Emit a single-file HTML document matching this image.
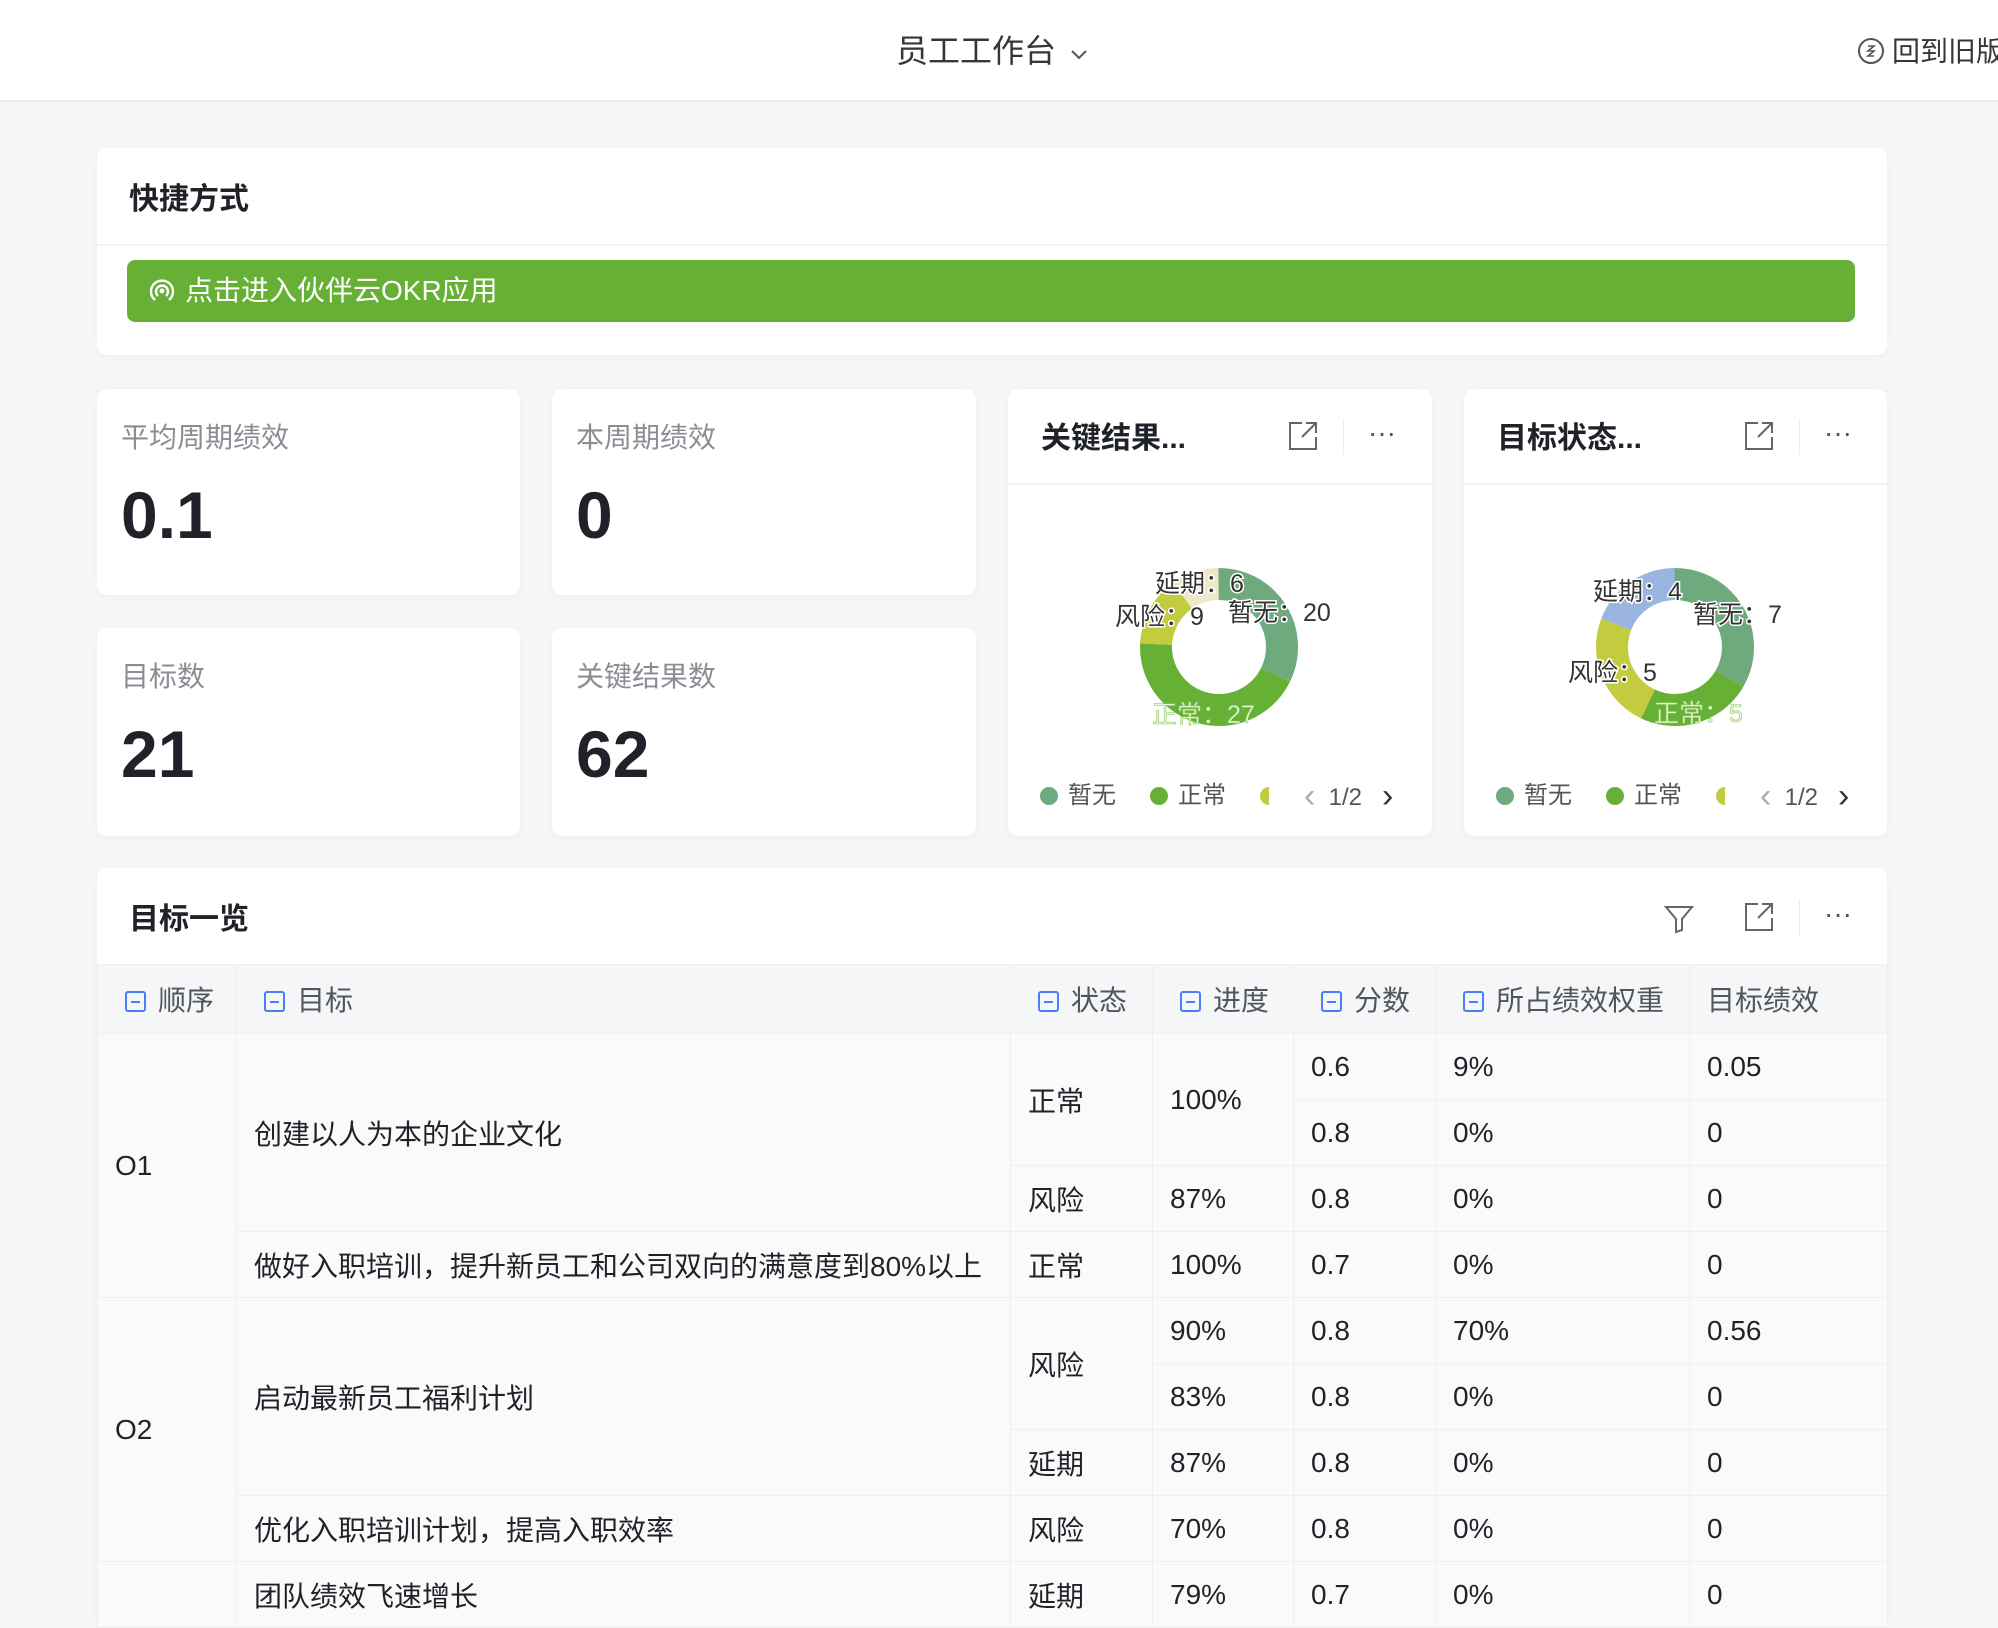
<!DOCTYPE html>
<html><head><meta charset="utf-8">
<style>
*{box-sizing:border-box;margin:0;padding:0}
body{width:1998px;height:1598px;overflow:hidden;background:#f5f6f8;font-family:"Liberation Sans","Noto Sans CJK SC",sans-serif;color:#1f2329;position:relative}
.top{position:absolute;left:0;top:0;width:1998px;height:102px;background:#fff;border-bottom:2px solid #e8e8e8}
.card{position:absolute;background:#fff;border-radius:10px;box-shadow:0 2px 10px rgba(0,0,0,0.03)}
.abs{position:absolute;white-space:nowrap}
.lbl{font-size:28px;color:#8a8d93}
.val{font-size:66px;font-weight:600;color:#1f2329;font-family:"Liberation Sans",sans-serif}
.ct{font-size:30px;font-weight:700}
table{border-collapse:collapse;table-layout:fixed;position:absolute;left:97px;top:964px;width:1790px}
td,th{border:1px solid #efefef;font-size:28px;font-weight:400;text-align:left;padding:0 0 0 17px;height:66px;color:#1f2329;white-space:nowrap;overflow:hidden}
th{background:#f5f6f7;height:69px;color:#51555c;padding-left:27px}
th:last-child{padding-left:17px}
td{background:#fafafa}
.cb{display:inline-block;width:21px;height:21px;border:2px solid #4a7ef5;border-radius:3px;vertical-align:-2px;margin-right:12px;position:relative}
.cb:after{content:"";position:absolute;left:4px;right:4px;top:8px;height:2px;background:#4a7ef5}
.dl{font-size:25px;fill:#333;paint-order:stroke;stroke:#fff;stroke-width:3px}
.ar{font-size:34px;line-height:30px;vertical-align:-2px}
</style></head><body>
<div class="top">
 <div class="abs" style="left:896px;top:26px;font-size:32px;color:#33363b">员工工作台 <svg width="20" height="14" viewBox="0 0 20 14" style="margin-left:4px"><path d="M3 3l7 7 7-7" fill="none" stroke="#555" stroke-width="2"/></svg></div>
 <div class="abs" style="left:1856px;top:30px;font-size:28px;color:#33363b"><svg width="30" height="30" viewBox="0 0 30 30" style="vertical-align:-5px;margin-right:6px"><circle cx="15" cy="15" r="12" fill="none" stroke="#555" stroke-width="2"/><path d="M12 10h6l-6 5h6l-6 5h6" fill="none" stroke="#555" stroke-width="1.6"/></svg>回到旧版</div>
</div>

<div class="card" style="left:97px;top:148px;width:1790px;height:207px">
 <div class="abs" style="left:32px;top:26px;font-size:30px;font-weight:700">快捷方式</div>
 <div class="abs" style="left:0;top:96px;width:1790px;height:2px;background:#f2f3f5"></div>
 <div class="abs" style="left:30px;top:112px;width:1728px;height:62px;background:#67b036;border-radius:8px;color:#fff;font-size:28px;line-height:62px;padding-left:20px"><svg width="30" height="30" viewBox="0 0 30 30" style="vertical-align:-6px;margin-right:8px"><path d="M8 24A11 11 0 1 1 22 24" fill="none" stroke="#fff" stroke-width="2.4"/><path d="M11 20A6 6 0 1 1 19 20" fill="none" stroke="#fff" stroke-width="2.4"/><circle cx="15" cy="15" r="2.5" fill="#fff"/></svg>点击进入伙伴云OKR应用</div>
</div>

<div class="card" style="left:97px;top:389px;width:423px;height:206px"><div class="abs lbl" style="left:24px;top:27px">平均周期绩效</div><div class="abs val" style="left:24px;top:88px">0.1</div></div>
<div class="card" style="left:552px;top:389px;width:424px;height:206px"><div class="abs lbl" style="left:24px;top:27px">本周期绩效</div><div class="abs val" style="left:24px;top:88px">0</div></div>
<div class="card" style="left:97px;top:628px;width:423px;height:208px"><div class="abs lbl" style="left:24px;top:27px">目标数</div><div class="abs val" style="left:24px;top:88px">21</div></div>
<div class="card" style="left:552px;top:628px;width:424px;height:208px"><div class="abs lbl" style="left:24px;top:27px">关键结果数</div><div class="abs val" style="left:24px;top:88px">62</div></div>

<!-- chart card 1 -->
<div class="card" style="left:1008px;top:389px;width:424px;height:447px">
 <div class="abs ct" style="left:33px;top:24px">关键结果...</div>
 <svg class="abs" style="left:278px;top:30px" width="34" height="34" viewBox="0 0 34 34"><path d="M16 4H4v26h26V18M20 4h10v10M30 4L16 18" fill="none" stroke="#666" stroke-width="2"/></svg>
 <div class="abs" style="left:335px;top:30px;width:1px;height:36px;background:#eee"></div>
 <div class="abs" style="left:360px;top:28px;font-size:28px;color:#555">···</div>
 <div class="abs" style="left:0;top:94px;width:424px;height:2px;background:#f2f3f5"></div>
 <svg class="abs" style="left:0;top:0" width="424" height="447">
  <g transform="translate(211 258) rotate(-90)">
   <circle r="63" fill="none" stroke="#6fa97e" stroke-width="32" pathLength="62" stroke-dasharray="20 42"/>
   <circle r="63" fill="none" stroke="#67b036" stroke-width="32" pathLength="62" stroke-dasharray="0 20 27 15"/>
   <circle r="63" fill="none" stroke="#c3cc3e" stroke-width="32" pathLength="62" stroke-dasharray="0 47 9 6"/>
   <circle r="63" fill="none" stroke="#ede8c8" stroke-width="32" pathLength="62" stroke-dasharray="0 56 6 0"/>
  </g>
  <text class="dl" x="147" y="203">延期：6</text>
  <text class="dl" x="107" y="236">风险：9</text>
  <text class="dl" x="220" y="232">暂无：20</text>
  <text x="144" y="334" font-size="25" fill="#e9f5dc" stroke="#8cc860" stroke-width="0.6">正常：27</text>
 </svg>
 <div class="abs" style="left:32px;top:392px;font-size:24px;color:#555;line-height:30px"><span style="display:inline-block;width:18px;height:18px;border-radius:50%;background:#6fa97e;vertical-align:-2px;margin-right:10px"></span>暂无</div>
 <div class="abs" style="left:142px;top:392px;font-size:24px;color:#555;line-height:30px"><span style="display:inline-block;width:18px;height:18px;border-radius:50%;background:#67b036;vertical-align:-2px;margin-right:10px"></span>正常</div>
 <div class="abs" style="left:252px;top:398px;width:9px;height:18px;border-radius:9px 0 0 9px;background:#c3cc3e"></div>
 <div class="abs" style="left:296px;top:392px;font-size:24px;color:#555;line-height:30px"><span class="ar" style="color:#aaa">&lsaquo;</span>&nbsp; 1/2 &nbsp;&nbsp;<span class="ar" style="color:#333">&rsaquo;</span></div>
</div>

<!-- chart card 2 -->
<div class="card" style="left:1464px;top:389px;width:423px;height:447px">
 <div class="abs ct" style="left:33px;top:24px">目标状态...</div>
 <svg class="abs" style="left:278px;top:30px" width="34" height="34" viewBox="0 0 34 34"><path d="M16 4H4v26h26V18M20 4h10v10M30 4L16 18" fill="none" stroke="#666" stroke-width="2"/></svg>
 <div class="abs" style="left:335px;top:30px;width:1px;height:36px;background:#eee"></div>
 <div class="abs" style="left:360px;top:28px;font-size:28px;color:#555">···</div>
 <div class="abs" style="left:0;top:94px;width:423px;height:2px;background:#f2f3f5"></div>
 <svg class="abs" style="left:0;top:0" width="423" height="447">
  <g transform="translate(211 258) rotate(-90)">
   <circle r="63" fill="none" stroke="#6fa97e" stroke-width="32" pathLength="21" stroke-dasharray="7 14"/>
   <circle r="63" fill="none" stroke="#67b036" stroke-width="32" pathLength="21" stroke-dasharray="0 7 5 9"/>
   <circle r="63" fill="none" stroke="#c3cc3e" stroke-width="32" pathLength="21" stroke-dasharray="0 12 5 4"/>
   <circle r="63" fill="none" stroke="#9bb5e2" stroke-width="32" pathLength="21" stroke-dasharray="0 17 4 0"/>
  </g>
  <text class="dl" x="129" y="211">延期：4</text>
  <text class="dl" x="229" y="234">暂无：7</text>
  <text class="dl" x="104" y="292">风险：5</text>
  <text x="190" y="333" font-size="25" fill="#e9f5dc" stroke="#8cc860" stroke-width="0.6">正常：5</text>
 </svg>
 <div class="abs" style="left:32px;top:392px;font-size:24px;color:#555;line-height:30px"><span style="display:inline-block;width:18px;height:18px;border-radius:50%;background:#6fa97e;vertical-align:-2px;margin-right:10px"></span>暂无</div>
 <div class="abs" style="left:142px;top:392px;font-size:24px;color:#555;line-height:30px"><span style="display:inline-block;width:18px;height:18px;border-radius:50%;background:#67b036;vertical-align:-2px;margin-right:10px"></span>正常</div>
 <div class="abs" style="left:252px;top:398px;width:9px;height:18px;border-radius:9px 0 0 9px;background:#c3cc3e"></div>
 <div class="abs" style="left:296px;top:392px;font-size:24px;color:#555;line-height:30px"><span class="ar" style="color:#aaa">&lsaquo;</span>&nbsp; 1/2 &nbsp;&nbsp;<span class="ar" style="color:#333">&rsaquo;</span></div>
</div>

<!-- table card -->
<div class="card" style="left:97px;top:868px;width:1790px;height:760px">
 <div class="abs" style="left:32px;top:26px;font-size:30px;font-weight:700">目标一览</div>
 <svg class="abs" style="left:1565px;top:34px" width="34" height="34" viewBox="0 0 34 34"><path d="M4 5h26L20 17v11l-6 2V17z" fill="none" stroke="#666" stroke-width="2"/></svg>
 <svg class="abs" style="left:1645px;top:32px" width="34" height="34" viewBox="0 0 34 34"><path d="M16 4H4v26h26V18M20 4h10v10M30 4L16 18" fill="none" stroke="#666" stroke-width="2"/></svg>
 <div class="abs" style="left:1702px;top:32px;width:1px;height:36px;background:#eee"></div>
 <div class="abs" style="left:1727px;top:30px;font-size:28px;color:#555">···</div>
</div>
<table>
<colgroup><col style="width:139px"><col style="width:774px"><col style="width:142px"><col style="width:141px"><col style="width:142px"><col style="width:254px"><col style="width:198px"></colgroup>
<tr><th><span class="cb"></span>顺序</th><th><span class="cb"></span>目标</th><th><span class="cb"></span>状态</th><th><span class="cb"></span>进度</th><th><span class="cb"></span>分数</th><th><span class="cb"></span>所占绩效权重</th><th>目标绩效</th></tr>
<tr><td rowspan="4">O1</td><td rowspan="3">创建以人为本的企业文化</td><td rowspan="2">正常</td><td rowspan="2">100%</td><td>0.6</td><td>9%</td><td>0.05</td></tr>
<tr><td>0.8</td><td>0%</td><td>0</td></tr>
<tr><td>风险</td><td>87%</td><td>0.8</td><td>0%</td><td>0</td></tr>
<tr><td>做好入职培训，提升新员工和公司双向的满意度到80%以上</td><td>正常</td><td>100%</td><td>0.7</td><td>0%</td><td>0</td></tr>
<tr><td rowspan="4">O2</td><td rowspan="3">启动最新员工福利计划</td><td rowspan="2">风险</td><td>90%</td><td>0.8</td><td>70%</td><td>0.56</td></tr>
<tr><td>83%</td><td>0.8</td><td>0%</td><td>0</td></tr>
<tr><td>延期</td><td>87%</td><td>0.8</td><td>0%</td><td>0</td></tr>
<tr><td>优化入职培训计划，提高入职效率</td><td>风险</td><td>70%</td><td>0.8</td><td>0%</td><td>0</td></tr>
<tr><td></td><td>团队绩效飞速增长</td><td>延期</td><td>79%</td><td>0.7</td><td>0%</td><td>0</td></tr>
</table>
</body></html>
